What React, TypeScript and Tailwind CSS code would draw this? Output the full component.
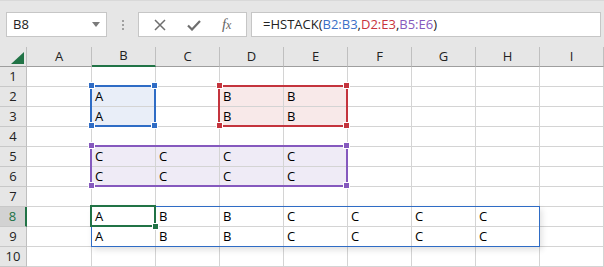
import React from "react";

const cols = ["A", "B", "C", "D", "E", "F", "G", "H", "I"];

type Cell = { t?: string; bg?: string };

function cellData(r: number, c: number): Cell {
  const col = cols[c];
  const bl = "bg-[#e9eef8]";
  const rd = "bg-[#f8e9e9]";
  const pu = "bg-[#efebf6]";
  if ((r === 2 || r === 3) && col === "B") return { t: "A", bg: bl };
  if ((r === 2 || r === 3) && (col === "D" || col === "E")) return { t: "B", bg: rd };
  if ((r === 5 || r === 6) && ["B", "C", "D", "E"].includes(col)) return { t: "C", bg: pu };
  if (r === 8 || r === 9) {
    const m: Record<string, string> = { B: "A", C: "B", D: "B", E: "C", F: "C", G: "C", H: "C" };
    if (m[col]) return { t: m[col] };
  }
  return {};
}

function Handle({ pos, color }: { pos: string; color: string }) {
  return <div className={`absolute w-[7px] h-[7px] border border-white ${pos} ${color}`} />;
}

export default function App() {
  const rows = [1, 2, 3, 4, 5, 6, 7, 8, 9, 10];
  return (
    <div className="w-[604px] h-[267px] overflow-hidden bg-[#e6e6e6] font-['Open_Sans',sans-serif] text-[#222]">
      {/* toolbar */}
      <div className="h-[47px] flex items-start pt-[11px] border-t border-[#d9d9d9]">
        <div className="ml-[6px] w-[101px] h-[25px] bg-white border border-[#c6c6c6] flex items-center justify-between pl-[6px] pr-[6px]">
          <span className="text-[13px] leading-none">B8</span>
          <svg width="8" height="5" viewBox="0 0 8 5">
            <path d="M0 0H8L4 5Z" fill="#7a7a7a" />
          </svg>
        </div>
        <div className="w-[31px] h-[25px] flex flex-col items-center justify-center gap-[2px]">
          <div className="w-[2px] h-[2px] bg-[#a0a0a0]" />
          <div className="w-[2px] h-[2px] bg-[#a0a0a0]" />
          <div className="w-[2px] h-[2px] bg-[#a0a0a0]" />
        </div>
        <div className="w-[109px] h-[25px] bg-white border border-[#c6c6c6] flex items-center justify-around px-[4px]">
          <svg width="12" height="12" viewBox="0 0 12 12">
            <path d="M1 1L11 11M11 1L1 11" stroke="#6e6e6e" strokeWidth="1.5" />
          </svg>
          <svg width="14" height="12" viewBox="0 0 14 12">
            <path d="M1 6.5L5 10.5L13 2" stroke="#6e6e6e" strokeWidth="2.2" fill="none" />
          </svg>
          <span className="font-['Liberation_Serif',serif] italic text-[15px] text-[#666] leading-none">
            f<span className="text-[12px]">x</span>
          </span>
        </div>
        <div className="ml-[4px] w-[350px] h-[25px] bg-white border border-[#c6c6c6] flex items-center pl-[11px] text-[13px] whitespace-nowrap">
          <span>=HSTACK(</span>
          <span className="text-[#3a6fc7]">B2:B3</span>
          <span>,</span>
          <span className="text-[#c8333d]">D2:E3</span>
          <span>,</span>
          <span className="text-[#8659bd]">B5:E6</span>
          <span>)</span>
        </div>
      </div>

      {/* grid */}
      <div className="relative">
        <div className="grid grid-cols-[27px_65px_64px_64px_64px_64px_64px_64px_64px_64px] grid-rows-[20px_repeat(10,20px)]">
          <div className="relative bg-[#e6e6e6] border-r border-b border-r-[#bfbfbf] border-b-[#9e9e9e]">
            <svg className="absolute right-[2px] bottom-[2px]" width="13" height="12" viewBox="0 0 13 12">
              <path d="M13 0V12H0Z" fill="#217346" />
            </svg>
          </div>
          {cols.map((c) => (
            <div
              key={c}
              className={`flex items-center justify-center text-[13px] bg-[#e6e6e6] border-r border-r-[#bfbfbf] ${
                c === "B" ? "border-b-2 border-b-[#217346]" : "border-b border-b-[#9e9e9e]"
              }`}
            >
              {c}
            </div>
          ))}
          {rows.map((r) => (
            <React.Fragment key={r}>
              <div
                className={`flex items-center justify-center text-[13px] border-b border-b-[#c8c8c8] ${
                  r === 8
                    ? "bg-[#d2d2d2] text-[#217346] border-r-2 border-r-[#217346]"
                    : "bg-[#e6e6e6] border-r border-r-[#bfbfbf]"
                }`}
              >
                {r}
              </div>
              {cols.map((_, ci) => {
                const d = cellData(r, ci);
                return (
                  <div
                    key={ci}
                    className={`flex items-center pl-[3px] text-[13px] text-black border-r border-b border-[#d4d4d4] ${d.bg ?? "bg-white"}`}
                  >
                    {d.t}
                  </div>
                );
              })}
            </React.Fragment>
          ))}
        </div>

        {/* spill range */}
        <div className="absolute left-[91px] top-[159px] w-[449px] h-[41px] border border-[#2f6cc5] shadow-[2px_3px_6px_rgba(0,0,0,0.12)]" />

        {/* B2:B3 */}
        <div className="absolute left-[90px] top-[38px] w-[66px] h-[42px]">
          <div className="absolute inset-0 border-2 border-[#2f6cc5]" />
          <Handle pos="-left-[2px] -top-[3px]" color="bg-[#2f6cc5]" />
          <Handle pos="-right-[2px] -top-[3px]" color="bg-[#2f6cc5]" />
          <Handle pos="-left-[2px] -bottom-[2px]" color="bg-[#2f6cc5]" />
          <Handle pos="-right-[2px] -bottom-[2px]" color="bg-[#2f6cc5]" />
        </div>

        {/* D2:E3 */}
        <div className="absolute left-[218px] top-[38px] w-[130px] h-[42px]">
          <div className="absolute inset-0 border-2 border-[#c4343d]" />
          <Handle pos="-left-[2px] -top-[3px]" color="bg-[#c4343d]" />
          <Handle pos="-right-[2px] -top-[3px]" color="bg-[#c4343d]" />
          <Handle pos="-left-[2px] -bottom-[2px]" color="bg-[#c4343d]" />
          <Handle pos="-right-[2px] -bottom-[2px]" color="bg-[#c4343d]" />
        </div>

        {/* B5:E6 */}
        <div className="absolute left-[90px] top-[98px] w-[258px] h-[42px]">
          <div className="absolute inset-0 border-2 border-[#8559be]" />
          <Handle pos="-left-[2px] -top-[3px]" color="bg-[#8559be]" />
          <Handle pos="-right-[2px] -top-[3px]" color="bg-[#8559be]" />
          <Handle pos="-left-[2px] -bottom-[2px]" color="bg-[#8559be]" />
          <Handle pos="-right-[2px] -bottom-[2px]" color="bg-[#8559be]" />
        </div>

        {/* active cell B8 */}
        <div className="absolute left-[90px] top-[158px] w-[66px] h-[22px]">
          <div className="absolute inset-0 border-2 border-[#217346]" />
          <div className="absolute -right-[3px] -bottom-[3px] w-[7px] h-[7px] bg-[#217346] border border-white" />
        </div>
      </div>
    </div>
  );
}
